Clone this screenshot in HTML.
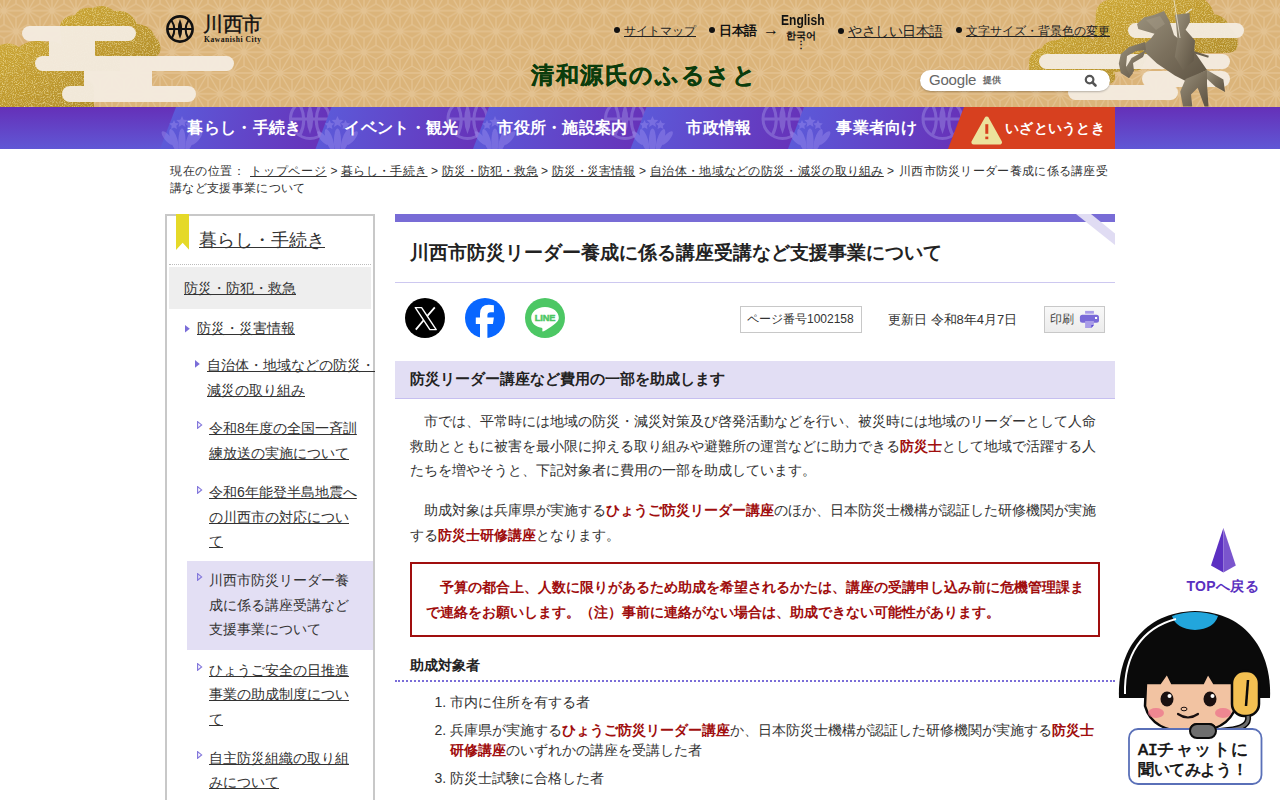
<!DOCTYPE html>
<html lang="ja"><head><meta charset="utf-8"><title>川西市防災リーダー養成に係る講座受講など支援事業について</title>
<style>
*{box-sizing:border-box}
html,body{margin:0;padding:0}
body{width:1280px;height:800px;overflow:hidden;position:relative;background:#fff;font-family:"Liberation Sans",sans-serif;color:#333;font-size:14px}
.abs{position:absolute}
a{color:#333}
#hdr{position:absolute;left:0;top:0;width:1280px;height:107px;background:#dbb47a;overflow:hidden}
.tl{font-size:13px;line-height:18px;color:#111;white-space:nowrap}
.tl a{color:#222}
.tl b{color:#111}
.dot{display:inline-block;width:6px;height:6px;border-radius:50%;background:#111;margin-right:5px;vertical-align:2px}
.tri{width:0;height:0;border-left:6px solid #7a6dd8;border-top:4px solid transparent;border-bottom:4px solid transparent}
.tro{width:6px;height:8px}
.tro polygon{fill:none;stroke:#8478dc;stroke-width:1.2}
.bc{font-size:12px;line-height:18px;color:#333;white-space:nowrap}
.sl{font-size:14px;line-height:24.5px;color:#333}
.txt{font-size:14px;line-height:24.5px;color:#333}
.r{color:#a00e0e}
#nav{position:absolute;left:0;top:107px;width:1280px;height:42px;overflow:hidden}
.nv{position:absolute;top:11px;width:200px;text-align:center;color:#fff;font-weight:bold;font-size:16px;line-height:20px;white-space:nowrap}
</style></head><body>
<div id="hdr">
<svg width="1280" height="107" style="position:absolute;left:0;top:0">
<defs><pattern id="asa" patternUnits="userSpaceOnUse" x="16" y="31.43" width="24" height="41.569">
<path d="M0.0 0.0L24.0 0.0 M24.0 0.0L12.0 20.8 M12.0 20.8L0.0 0.0 M12.0 6.9L0.0 0.0 M12.0 6.9L24.0 0.0 M12.0 6.9L12.0 20.8 M-12.0 20.8L12.0 20.8 M0.0 0.0L-12.0 20.8 M0.0 13.9L-12.0 20.8 M0.0 13.9L12.0 20.8 M0.0 13.9L0.0 0.0 M12.0 20.8L36.0 20.8 M36.0 20.8L24.0 0.0 M24.0 13.9L12.0 20.8 M24.0 13.9L36.0 20.8 M24.0 13.9L24.0 0.0 M12.0 20.8L0.0 41.6 M0.0 41.6L-12.0 20.8 M0.0 27.7L-12.0 20.8 M0.0 27.7L12.0 20.8 M0.0 27.7L0.0 41.6 M36.0 20.8L24.0 41.6 M24.0 41.6L12.0 20.8 M24.0 27.7L12.0 20.8 M24.0 27.7L36.0 20.8 M24.0 27.7L24.0 41.6 M0.0 41.6L24.0 41.6 M12.0 34.6L0.0 41.6 M12.0 34.6L24.0 41.6 M12.0 34.6L12.0 20.8" stroke="#e3c291" stroke-width="1.3" fill="none"/>
</pattern></defs>
<rect width="1280" height="107" fill="url(#asa)"/>
</svg>
<!-- left clouds -->
<svg width="260" height="107" style="position:absolute;left:0;top:0">
<defs>
<linearGradient id="gold1" x1="0" y1="0" x2="1" y2="1"><stop offset="0" stop-color="#d2ae3a"/><stop offset=".5" stop-color="#c09a2e"/><stop offset="1" stop-color="#a9862a"/></linearGradient>
<filter id="grain" x="0" y="0" width="100%" height="100%"><feTurbulence type="fractalNoise" baseFrequency="0.9" numOctaves="2" seed="4" result="noise"/><feColorMatrix in="noise" type="matrix" values="0 0 0 0 1  0 0 0 0 0.86  0 0 0 0 0.35  1.6 0 0 0 -0.75" result="n2"/><feComposite in="n2" in2="SourceAlpha" operator="in" result="n3"/><feColorMatrix in="noise" type="matrix" values="0 0 0 0 0.45  0 0 0 0 0.33  0 0 0 0 0.05  0 1.4 0 0 -0.8" result="d2"/><feComposite in="d2" in2="SourceAlpha" operator="in" result="d3"/><feMerge><feMergeNode in="SourceGraphic"/><feMergeNode in="n3"/><feMergeNode in="d3"/></feMerge></filter>
</defs>
<path fill="url(#gold1)" filter="url(#grain)" d="M0 45 Q10 41 19 47 Q32 38 47 42 Q56 40 62 46 L60 26 Q62 16 75 15 Q80 6 93 8 Q104 3 114 11 Q130 9 137 24 Q151 25 155 37 Q162 43 160 52 L156 58 L120 58 L120 71 L84 71 L84 79 Q93 81 94 89 L94 107 L0 107 Z"/>
<g fill="#f4ece0" opacity=".96">
<rect x="22" y="26" width="114" height="15" rx="7.5"/>
<rect x="35" y="56" width="199" height="15" rx="7.5"/>
<rect x="62" y="86" width="134" height="16" rx="8"/>
<rect x="49" y="36" width="46" height="25"/>
<rect x="84" y="66" width="68" height="25"/>
</g>
</svg>
<!-- right clouds -->
<svg width="260" height="107" style="position:absolute;left:1020px;top:0">
<path fill="url(#gold1)" filter="url(#grain)" d="M9 82 L9 62 Q10 50 22 48 Q26 40 38 40 Q44 34 56 36 Q66 34 74 40 L76 12 Q78 2 88 0 L185 0 Q192 6 194 14 Q206 16 210 28 Q220 36 217 48 Q215 53 205 53 L130 53 L120 70 L94 72 Q98 82 88 84 Z"/>
<g fill="#f4ece0" opacity=".96">
<rect x="108" y="23" width="116" height="15" rx="7.5"/>
<rect x="19" y="54" width="191" height="15" rx="7.5"/>
<rect x="48" y="85" width="110" height="15" rx="7.5"/>
<rect x="122" y="71" width="88" height="16" rx="8"/>
</g>
</svg>
<!-- statue -->
<svg width="140" height="107" viewBox="1110 0 140 107" style="position:absolute;left:1110px;top:0">
<defs><linearGradient id="brz" x1="0" y1="0" x2="1" y2="1"><stop offset="0" stop-color="#9a917d"/><stop offset=".5" stop-color="#7b705d"/><stop offset="1" stop-color="#5d5343"/></linearGradient></defs>
<g fill="url(#brz)">
<path d="M1137 24 L1144 17.5 L1154.5 14.8 L1164 11 L1169.5 21 L1174 35 L1196 54 L1207 70 L1185.6 81 L1174.8 75.6 L1157 63.4 L1143.7 51 L1143.7 44.5 L1150.5 39 L1154.5 33.7 L1145 31 L1138.3 29 Z"/>
<path d="M1145 42 L1129 47 L1120.8 54 L1118.8 63.4 L1120.8 72.9 L1129 78.3 L1133 72.9 L1126 66 L1127 56 L1136 51 L1146 50 Z"/>
<path d="M1146 50 L1131.6 58 L1126 67.5 L1130 75.6 L1134 71 L1133 63 L1143 57 Z"/>
<path d="M1207 70 L1223.4 79.6 L1225 92 L1215.3 86.4 L1206 78 Z"/>
<path d="M1185.6 79 L1180.2 91.8 L1183 106.6 L1192.3 106.6 L1191 94.5 L1197.7 87.7 L1204.5 106.6 L1208.5 106.6 L1207 83.7 L1207 70 Z"/>
<path d="M1174.8 14.8 L1189.6 13 L1190 22 L1185.6 29.7 L1195 40.5 L1193.7 60.7 L1183 70 L1174.8 56.7 L1177.5 40 L1176 23 Z"/>
</g>
<path d="M1191 51.3 L1208.5 56.7" stroke="#6a604f" stroke-width="2"/>
<path d="M1174 0 L1180 38" stroke="#ece4d4" stroke-width="1" opacity=".8"/>
<path d="M1186 13 L1192 9" stroke="#e8e0d0" stroke-width="1.2"/>
<path d="M1146 20 L1160 16 L1165 24 L1156 30 Z" fill="#aaa08c" opacity=".4"/>
</svg>
<!-- logo -->
<svg width="30" height="30" viewBox="0 0 30 30" style="position:absolute;left:165px;top:14px">
<circle cx="15" cy="15" r="12.6" fill="none" stroke="#111" stroke-width="2.6"/>
<line x1="2" y1="15" x2="28" y2="15" stroke="#111" stroke-width="2"/>
<path d="M15 5 Q19.5 15 15 25 Q10.5 15 15 5Z" fill="#111"/>
<path d="M6.5 6.5 Q12 15 7 24" fill="none" stroke="#111" stroke-width="2"/>
<path d="M23.5 6.5 Q18 15 23 24" fill="none" stroke="#111" stroke-width="2"/>
</svg>
<div class="abs" style="left:203px;top:12px;font-family:'Liberation Serif',serif;font-size:20px;letter-spacing:-0.5px;color:#111;line-height:24px;-webkit-text-stroke:0.4px #111">川西市</div>
<div class="abs" style="left:204px;top:35px;font-family:'Liberation Serif',serif;font-size:7.5px;font-weight:bold;color:#111;line-height:9px;letter-spacing:0.55px">Kawanishi City</div>
<!-- top links -->
<div class="abs tl" style="left:614px;top:22px"><span class="dot" style="margin-right:4px"></span><a href="#" style="font-size:12px">サイトマップ</a></div>
<div class="abs tl" style="left:709px;top:22px"><span class="dot" style="margin-right:4px"></span><b style="font-size:12.5px;letter-spacing:-0.3px">日本語</b></div>
<div class="abs" style="left:763px;top:20px;font-size:16px;line-height:20px;color:#111">→</div>
<div class="abs" style="left:781px;top:12px;font-size:14px;font-weight:bold;color:#111;line-height:16px;transform:scaleX(0.86);transform-origin:0 0">English</div>
<div class="abs" style="left:786px;top:29px;font-size:10px;font-weight:bold;color:#111;line-height:13px">한국어</div>
<div class="abs" style="left:796px;top:39px;font-size:10px;font-weight:bold;color:#111;line-height:12px">⋮</div>
<div class="abs tl" style="left:838px;top:22px"><span class="dot" style="margin-right:4px"></span><a href="#" style="font-size:14px;letter-spacing:-0.5px">やさしい日本語</a></div>
<div class="abs tl" style="left:956px;top:22px"><span class="dot" style="margin-right:4px"></span><a href="#" style="font-size:12px">文字サイズ・背景色の変更</a></div>
<!-- catch -->
<div class="abs" style="left:531px;top:61px;font-family:'Liberation Serif',serif;font-size:23px;font-weight:bold;color:#0b3c0c;line-height:30px;letter-spacing:1.6px;-webkit-text-stroke:0.3px #0b3c0c">清和源氏のふるさと</div>
<!-- google search -->
<div class="abs" style="left:920px;top:70px;width:190px;height:21px;border-radius:11px;background:#fff;box-shadow:0 1px 2px rgba(0,0,0,.25)"></div>
<div class="abs" style="left:929px;top:69px;font-size:15px;color:#666;line-height:22px;letter-spacing:-0.2px">Google</div>
<div class="abs" style="left:983px;top:74px;font-size:9px;font-weight:bold;color:#666;line-height:12px">提供</div>
<svg width="14" height="14" viewBox="0 0 14 14" style="position:absolute;left:1084px;top:74px"><circle cx="5.6" cy="5.6" r="3.8" fill="none" stroke="#555" stroke-width="2.2"/><line x1="8.4" y1="8.4" x2="11.5" y2="11.5" stroke="#555" stroke-width="2.6" stroke-linecap="round"/></svg>


</div>
<div id="nav">
<svg width="1280" height="42" style="position:absolute;left:0;top:0">
<defs><linearGradient id="navbg" x1="0" y1="0" x2="0" y2="1"><stop offset="0" stop-color="#6530b8"/><stop offset="1" stop-color="#6057d5"/></linearGradient>
<g id="bell" fill="#a293f0" opacity=".4"><ellipse cx="20" cy="29" rx="3.6" ry="12.5"/><ellipse cx="12" cy="28" rx="3.4" ry="11.5" transform="rotate(-18 12 28)"/><ellipse cx="28" cy="28" rx="3.4" ry="11.5" transform="rotate(18 28 28)"/><ellipse cx="5.5" cy="26" rx="3" ry="8.5" transform="rotate(-40 5.5 26)"/><ellipse cx="34.5" cy="26" rx="3" ry="8.5" transform="rotate(40 34.5 26)"/><polygon points="20.0,4.0 21.6,7.7 25.7,8.1 22.7,10.9 23.5,14.9 20.0,12.8 16.5,14.9 17.3,10.9 14.3,8.1 18.4,7.7"/><polygon points="12.0,8.0 13.4,11.1 16.8,11.5 14.3,13.7 14.9,17.0 12.0,15.4 9.1,17.0 9.7,13.7 7.2,11.5 10.6,11.1"/><polygon points="28.0,8.0 29.4,11.1 32.8,11.5 30.3,13.7 30.9,17.0 28.0,15.4 25.1,17.0 25.7,13.7 23.2,11.5 26.6,11.1"/></g>
<g id="emb" fill="none" stroke="#9a88e0" stroke-width="3" opacity=".5"><circle cx="0" cy="0" r="19.5"/><path d="M-19.5 0 H19.5"/><path d="M0 -15 Q6.5 0 0 15 Q-6.5 0 0 -15Z" fill="#9a88e0" stroke="none"/><path d="M-11 -16 Q-2 0 -10 16"/><path d="M11 -16 Q2 0 10 16"/></g>
<linearGradient id="ng0" gradientUnits="userSpaceOnUse" x1="170" y1="0" x2="325.5" y2="42"><stop offset="0" stop-color="#5c5ad9"/><stop offset="1" stop-color="#6731b8"/></linearGradient>
<linearGradient id="ng1" gradientUnits="userSpaceOnUse" x1="325.5" y1="0" x2="483" y2="42"><stop offset="0" stop-color="#5c5ad9"/><stop offset="1" stop-color="#6731b8"/></linearGradient>
<linearGradient id="ng2" gradientUnits="userSpaceOnUse" x1="483" y1="0" x2="640.5" y2="42"><stop offset="0" stop-color="#5c5ad9"/><stop offset="1" stop-color="#6731b8"/></linearGradient>
<linearGradient id="ng3" gradientUnits="userSpaceOnUse" x1="640.5" y1="0" x2="798" y2="42"><stop offset="0" stop-color="#5c5ad9"/><stop offset="1" stop-color="#6731b8"/></linearGradient>
<linearGradient id="ng4" gradientUnits="userSpaceOnUse" x1="798" y1="0" x2="958" y2="42"><stop offset="0" stop-color="#5c5ad9"/><stop offset="1" stop-color="#6731b8"/></linearGradient>
</defs><rect width="1280" height="42" fill="url(#navbg)"/>
<polygon points="160,42 176,0 345.5,0 345.5,42" fill="url(#ng0)"/>
<use href="#bell" x="162" y="5"/>
<use href="#emb" x="310.0" y="12"/>
<polygon points="315.5,42 331.5,0 503,0 503,42" fill="url(#ng1)"/>
<use href="#bell" x="317.5" y="5"/>
<use href="#emb" x="467.5" y="12"/>
<polygon points="473,42 489,0 660.5,0 660.5,42" fill="url(#ng2)"/>
<use href="#bell" x="475" y="5"/>
<use href="#emb" x="625.0" y="12"/>
<polygon points="630.5,42 646.5,0 818,0 818,42" fill="url(#ng3)"/>
<use href="#bell" x="632.5" y="5"/>
<use href="#emb" x="782.5" y="12"/>
<polygon points="788,42 804,0 978,0 978,42" fill="url(#ng4)"/>
<use href="#bell" x="790" y="5"/>
<use href="#emb" x="942.5" y="12"/>
<polygon points="948,42 964,0 1115,0 1115,42" fill="#d7401f"/>
<path d="M986.7 11.8 L999.8 35.3 L973.6 35.3Z" fill="#ece29c" stroke="#ece29c" stroke-width="4.5" stroke-linejoin="round"/>
<rect x="985.3" y="17.2" width="3" height="9.6" fill="#d7401f"/><rect x="985.3" y="29.6" width="3" height="2.6" fill="#d7401f"/>
</svg>
<div class="nv" style="letter-spacing:0.3px;left:144.5px">暮らし・手続き</div>
<div class="nv" style="letter-spacing:0.3px;left:301.5px">イベント・観光</div>
<div class="nv" style="letter-spacing:0.3px;left:462.5px">市役所・施設案内</div>
<div class="nv" style="letter-spacing:0.3px;left:619px">市政情報</div>
<div class="nv" style="letter-spacing:0.3px;left:777px">事業者向け</div>
<div class="nv" style="left:1005px;width:auto;text-align:left;font-size:14.4px;letter-spacing:0.3px">いざというとき</div>
</div>

<!-- breadcrumb -->
<div class="abs bc" style="left:170px;top:162px;letter-spacing:0.5px">現在の位置：</div>
<div class="abs bc" style="left:250px;top:162px;letter-spacing:0.78px"><a href="#">トップページ</a></div>
<div class="abs bc" style="left:330.5px;top:162px">&gt;</div>
<div class="abs bc" style="left:340.8px;top:162px;letter-spacing:0.39px"><a href="#">暮らし・手続き</a></div>
<div class="abs bc" style="left:431px;top:162px">&gt;</div>
<div class="abs bc" style="left:441.7px;top:162px;letter-spacing:0.06px"><a href="#">防災・防犯・救急</a></div>
<div class="abs bc" style="left:541px;top:162px">&gt;</div>
<div class="abs bc" style="left:551.6px;top:162px;letter-spacing:-0.04px"><a href="#">防災・災害情報</a></div>
<div class="abs bc" style="left:639px;top:162px">&gt;</div>
<div class="abs bc" style="left:650.1px;top:162px;letter-spacing:0.3px"><a href="#">自治体・地域などの防災・減災の取り組み</a></div>
<div class="abs bc" style="left:887px;top:162px">&gt;</div>
<div class="abs bc" style="left:899px;top:162px;letter-spacing:0.3px">川西市防災リーダー養成に係る講座受</div>
<div class="abs bc" style="left:170px;top:179px;letter-spacing:0.35px">講など支援事業について</div>
<!-- sidebar -->
<div class="abs" id="side" style="left:165px;top:214px;width:210px;height:600px;border:2px solid #c8c8c8;border-bottom:0">
 <div class="abs" style="left:9px;top:-2px;width:13.3px;height:36px;background:#e5d928;clip-path:polygon(0 0,100% 0,100% 100%,50% 80%,0 100%)"></div>
 <div class="abs" style="left:32px;top:12px;font-size:18px;line-height:24px"><a href="#">暮らし・手続き</a></div>
 <div class="abs" style="left:2px;top:48px;width:202px;border-top:1px dotted #bbb"></div>
 <div class="abs" style="left:2px;top:51px;width:202px;height:42px;background:#eee"></div>
 <div class="abs" style="left:17px;top:62px;font-size:14px;line-height:20px"><a href="#">防災・防犯・救急</a></div>
 <svg class="abs" style="left:18px;top:108.5px" width="6" height="8"><polygon points="0,0 4.8,3.8 0,7.6" fill="#7a6dd8"/></svg>
 <div class="abs" style="left:30px;top:102px;font-size:14px;line-height:20px"><a href="#">防災・災害情報</a></div>
 <svg class="abs" style="left:28px;top:144px" width="6" height="8"><polygon points="0,0 4.8,3.9 0,7.8" fill="#7a6dd8"/></svg>
 <div class="abs sl" style="left:40px;top:137px;width:170px"><a href="#">自治体・地域などの防災・減災の取り組み</a></div>
 <svg class="abs tro" style="left:29.5px;top:205px"><polygon points="0.6,0.6 4.6,3.9 0.6,7.2"/></svg>
 <div class="abs sl" style="left:42px;top:200px;width:150px"><a href="#">令和8年度の全国一斉訓練放送の実施について</a></div>
 <svg class="abs tro" style="left:29.5px;top:269.5px"><polygon points="0.6,0.6 4.6,3.9 0.6,7.2"/></svg>
 <div class="abs sl" style="left:42px;top:264px;width:150px"><a href="#">令和6年能登半島地震への川西市の対応について</a></div>
 <div class="abs" style="left:20px;top:345px;width:186px;height:89px;background:#e3dff4"></div>
 <svg class="abs tro" style="left:29.5px;top:357px"><polygon points="0.6,0.6 4.6,3.9 0.6,7.2"/></svg>
 <div class="abs sl" style="left:42px;top:352px;width:150px">川西市防災リーダー養成に係る講座受講など支援事業について</div>
 <svg class="abs tro" style="left:29.5px;top:447px"><polygon points="0.6,0.6 4.6,3.9 0.6,7.2"/></svg>
 <div class="abs sl" style="left:42px;top:441.5px;width:150px"><a href="#">ひょうご安全の日推進事業の助成制度について</a></div>
 <svg class="abs tro" style="left:29.5px;top:535px"><polygon points="0.6,0.6 4.6,3.9 0.6,7.2"/></svg>
 <div class="abs sl" style="left:42px;top:529.5px;width:150px"><a href="#">自主防災組織の取り組みについて</a></div>
</div>
<!-- main -->
<div class="abs" style="left:395px;top:214px;width:720px;height:8px;background:#786cd6"></div>
<svg class="abs" style="left:1070px;top:214px" width="45" height="32"><polygon points="6,0 21,0 45,19.5 45,31" fill="#e0dcf3"/></svg>
<div class="abs" style="left:410px;top:240px;font-size:19px;font-weight:bold;line-height:26px;color:#222;white-space:nowrap">川西市防災リーダー養成に係る講座受講など支援事業について</div>
<div class="abs" style="left:395px;top:282px;width:720px;height:1px;background:#cdc8f0"></div>
<!-- social -->
<svg class="abs" style="left:405px;top:298px" width="40" height="40" viewBox="0 0 40 40"><circle cx="20" cy="20" r="20" fill="#000"/><path d="M10.3 9.6 L16.6 9.6 L31.2 31.6 L24.9 31.6Z" fill="none" stroke="#fff" stroke-width="1.4" stroke-linejoin="round"/><path d="M29.8 9.4 L22.4 17.8 M18.6 22.2 L10.8 31.6" stroke="#fff" stroke-width="1.8"/></svg>
<svg class="abs" style="left:465px;top:298px" width="40" height="40" viewBox="0 0 40 40"><circle cx="20" cy="20" r="20" fill="#0866ff"/><path d="M15 40 V26.1 H10.8 V19.4 H15 V15.8 Q15 6.8 23.8 6.8 Q26.6 6.8 28.9 7.3 V14.3 H25.8 Q22.4 14.3 22.4 17.6 V19.4 H28.9 L27.9 26.1 H22.4 V40Z" fill="#fff"/></svg>
<svg class="abs" style="left:525px;top:298px" width="40" height="40" viewBox="0 0 40 40"><circle cx="20" cy="20" r="20" fill="#4cc764"/><path d="M20 9 C11.5 9 6.2 14.2 6.2 20 C6.2 25 10.4 28.8 16.4 29.7 C17.6 29.9 17.6 31 17.3 32.6 C17.1 33.7 18 33.9 19.2 33.1 C23.5 30.3 33.8 25 33.8 20 C33.8 14.2 28.5 9 20 9Z" fill="#fff"/><text x="20" y="23.2" text-anchor="middle" font-family="Liberation Sans" font-weight="bold" font-size="9.2" fill="#4cc764" stroke="#4cc764" stroke-width="0.5" letter-spacing="-0.1">LINE</text></svg>
<div class="abs" style="left:740px;top:306px;width:122px;height:27px;border:1px solid #c8c8c8;font-size:12px;line-height:25px;padding-left:6px;white-space:nowrap;color:#333">ページ番号1002158</div>
<div class="abs" style="left:888px;top:306px;font-size:13px;line-height:27px;white-space:nowrap;color:#333">更新日 令和8年4月7日</div>
<div class="abs" style="left:1044px;top:306px;width:61px;height:27px;border:1px solid #c8c8c8;background:linear-gradient(#f8f8f8,#ececec);font-size:12px;line-height:25px;padding-left:5px;color:#444">印刷</div>
<svg class="abs" style="left:1079px;top:310px" width="21" height="19" viewBox="0 0 21 19"><rect x="6.1" y="0.9" width="8.8" height="2.8" fill="#a99de8"/><rect x="0.9" y="4.8" width="19.1" height="7.9" rx="2.5" fill="#7a6ad8"/><rect x="16" y="7" width="2.1" height="2" fill="#fff"/><polygon points="6.1,11 14.9,11 14.9,14.9 12.1,17.9 6.1,17.9" fill="#a99de8"/><polygon points="12.4,15 14.9,15 12.4,17.9" fill="#5b4ad4"/></svg>
<!-- h2 -->
<div class="abs" style="left:395px;top:361px;width:720px;height:38px;background:#e2def4;border-bottom:1px solid #c6bff0"></div>
<div class="abs" style="left:410px;top:368px;font-size:15px;font-weight:bold;line-height:22px;color:#222">防災リーダー講座など費用の一部を助成します</div>
<div class="abs txt" style="left:410px;top:409px;width:690px">　市では、平常時には地域の防災・減災対策及び啓発活動などを行い、被災時には地域のリーダーとして人命救助とともに被害を最小限に抑える取り組みや避難所の運営などに助力できる<b class="r">防災士</b>として地域で活躍する人たちを増やそうと、下記対象者に費用の一部を助成しています。</div>
<div class="abs txt" style="left:410px;top:498px;width:690px">　助成対象は兵庫県が実施する<b class="r">ひょうご防災リーダー講座</b>のほか、日本防災士機構が認証した研修機関が実施する<b class="r">防災士研修講座</b>となります。</div>
<div class="abs" style="left:410px;top:562px;width:690px;height:75px;border:2px solid #a00e0e"></div>
<div class="abs txt" style="left:426px;top:575px;width:662px;color:#a00e0e;font-weight:bold">　予算の都合上、人数に限りがあるため助成を希望されるかたは、講座の受講申し込み前に危機管理課まで連絡をお願いします。（注）事前に連絡がない場合は、助成できない可能性があります。</div>
<div class="abs" style="left:410px;top:655px;font-size:14px;font-weight:bold;line-height:20px;color:#222">助成対象者</div>
<div class="abs" style="left:395px;top:680px;width:720px;border-top:2px dotted #7a6dd8"></div>
<ol class="abs" style="left:410px;top:691.5px;width:690px;margin:0;padding-left:40px;font-size:14px;line-height:20.5px;color:#333">
<li style="margin-bottom:7.5px">市内に住所を有する者</li>
<li style="margin-bottom:7.5px">兵庫県が実施する<b class="r">ひょうご防災リーダー講座</b>か、日本防災士機構が認証した研修機関が実施する<b class="r">防災士研修講座</b>のいずれかの講座を受講した者</li>
<li>防災士試験に合格した者</li>
</ol>
<!-- top button -->
<svg class="abs" style="left:1205px;top:526px" width="38" height="50"><polygon points="18.4,2 6,39.6 18.4,46.4" fill="#5c30c2"/><polygon points="18.4,2 30.8,39.6 18.4,46.4" fill="#7a55cd"/></svg>
<div class="abs" style="left:1186.5px;top:576px;font-size:14px;font-weight:bold;line-height:20px;color:#5a30c0;white-space:nowrap;letter-spacing:0.3px">TOPへ戻る</div>

<!-- AI chat -->
<svg class="abs" style="left:1110px;top:605px" width="170" height="190" viewBox="1110 605 170 190">
<path d="M1119 698 C1117 652 1143 612 1195 611 C1247 612 1272 652 1270 698 Z" fill="#0a0a0a"/>
<path d="M1172 616 Q1195 608 1218 616 Q1214 629 1195 630 Q1176 629 1172 616Z" fill="#22a6dc"/>
<path d="M1125 694 C1124 655 1142 628 1176 619" fill="none" stroke="#fff" stroke-width="2"/>
<path d="M1146 683 L1160 683 L1167 673 L1172 683 L1203 683 L1208 673 L1214 683 L1233 683 L1236 706 C1230 726 1212 732 1190 732 C1166 732 1150 724 1145 706 Z" fill="#f2c3a2" stroke="#0a0a0a" stroke-width="2.5"/>
<ellipse cx="1156" cy="713" rx="8" ry="5" fill="#ec6d8a" opacity=".7"/>
<ellipse cx="1223" cy="713" rx="8" ry="5" fill="#ec6d8a" opacity=".7"/>
<ellipse cx="1167" cy="699" rx="6.5" ry="7.5" fill="#1a1010"/>
<ellipse cx="1210" cy="699" rx="6.5" ry="7.5" fill="#1a1010"/>
<circle cx="1169.5" cy="696" r="2" fill="#fff"/><circle cx="1212.5" cy="696" r="2" fill="#fff"/>
<ellipse cx="1184" cy="709" rx="3" ry="1.8" fill="none" stroke="#1a1010" stroke-width="1"/>
<path d="M1178 714 Q1188 721 1198 714" fill="none" stroke="#1a1010" stroke-width="2.2" stroke-linecap="round"/>
<rect x="1232" y="671" width="27" height="45" rx="12" fill="#f3c052" stroke="#0a0a0a" stroke-width="2.5"/>
<path d="M1248 680 L1246 706" stroke="#0a0a0a" stroke-width="2.5"/>
<path d="M1248 716 Q1250 728 1228 730 L1212 732" fill="none" stroke="#0a0a0a" stroke-width="6"/>
<path d="M1248 716 Q1250 728 1228 730 L1212 732" fill="none" stroke="#6e6e6e" stroke-width="3"/>
<rect x="1190" y="724" width="26" height="14" rx="7" fill="#6e6e6e" stroke="#0a0a0a" stroke-width="2"/>
<rect x="1129" y="729" width="132.5" height="55" rx="9" fill="#fff" stroke="#5a70b8" stroke-width="1.8"/>
<rect x="1190" y="724" width="26" height="14" rx="7" fill="#6e6e6e" stroke="#0a0a0a" stroke-width="2"/>
</svg>
<div class="abs" style="left:1138px;top:740px;font-size:17px;line-height:20px;color:#111;white-space:nowrap;letter-spacing:1.5px;-webkit-text-stroke:0.6px #111"><span style="font-family:'Liberation Mono',monospace;letter-spacing:-0.5px">AI</span>チャットに</div>
<div class="abs" style="left:1138px;top:760px;font-size:16px;line-height:20px;color:#111;white-space:nowrap;letter-spacing:-0.4px;-webkit-text-stroke:0.6px #111">聞いてみよう！</div>
</body></html>
